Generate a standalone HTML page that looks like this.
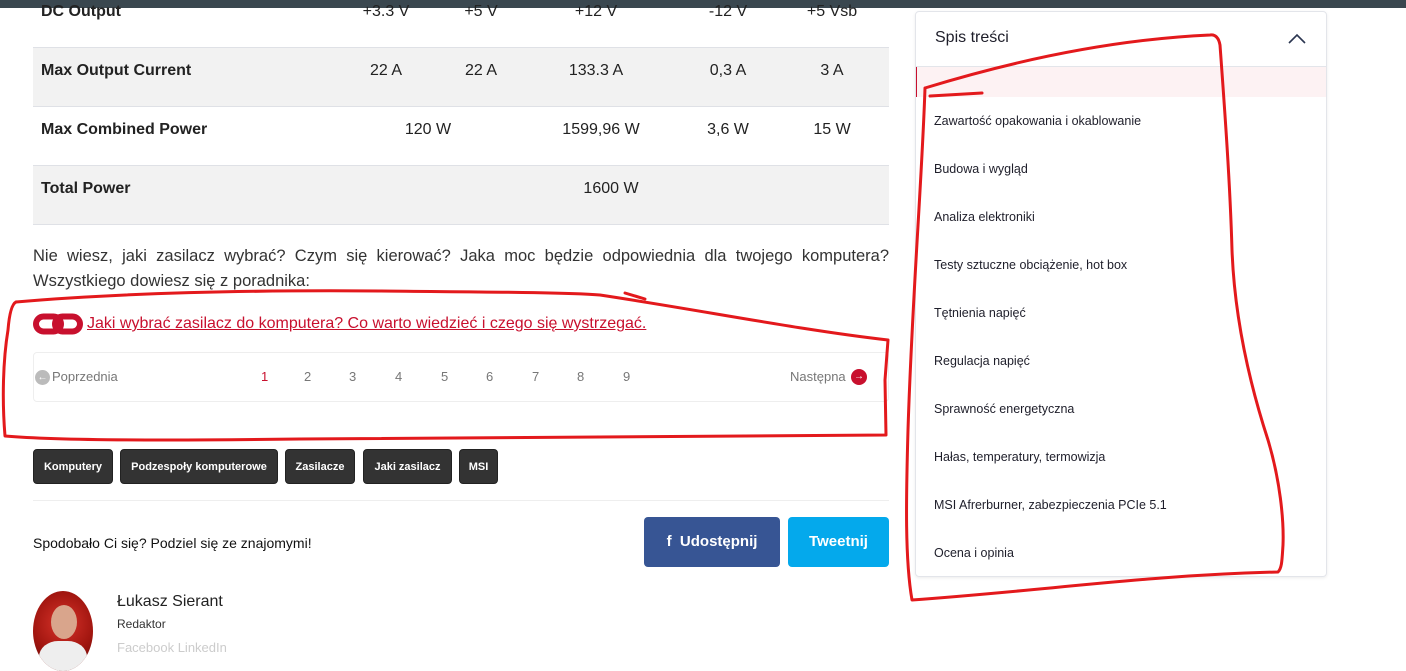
<!DOCTYPE html>
<html><head><meta charset="utf-8"><style>
*{margin:0;padding:0;box-sizing:border-box}
body{width:1406px;height:663px;overflow:hidden;background:#fff;font-family:"Liberation Sans",sans-serif;color:#222;position:relative}
.a{position:absolute;white-space:nowrap}
.row{position:absolute;left:33px;width:856px;height:59px;border-bottom:1px solid #dfe1e6}
.g{background:#f2f2f2}
.th{font-weight:bold;font-size:16px;left:41px}
.td{font-size:16px;transform:translateX(-50%)}
.tag{position:absolute;top:449px;height:35px;background:#333;color:#fff;font-size:11px;font-weight:bold;border-radius:4px;line-height:35px;text-align:center;border:1px solid #222}
.toc{font-size:12.5px;color:#1e1e2a;left:934px}
.pg{font-size:13px;color:#777;top:369px}
</style></head><body>
<div class="a" style="left:0;top:0;width:1406px;height:8px;background:#3a474f"></div>

<div class="row" style="top:-11px;height:59px;border-bottom:1px solid #dfe1e6"></div>
<div class="row g" style="top:48px"></div>
<div class="row" style="top:107px"></div>
<div class="row g" style="top:166px"></div>
<div class="a th" style="top:3px">DC Output</div>
<div class="a td" style="left:386px;top:3px">+3.3 V</div>
<div class="a td" style="left:481px;top:3px">+5 V</div>
<div class="a td" style="left:596px;top:3px">+12 V</div>
<div class="a td" style="left:728px;top:3px">-12 V</div>
<div class="a td" style="left:832px;top:3px">+5 Vsb</div>
<div class="a th" style="top:62px">Max Output Current</div>
<div class="a td" style="left:386px;top:62px">22 A</div>
<div class="a td" style="left:481px;top:62px">22 A</div>
<div class="a td" style="left:596px;top:62px">133.3 A</div>
<div class="a td" style="left:728px;top:62px">0,3 A</div>
<div class="a td" style="left:832px;top:62px">3 A</div>
<div class="a th" style="top:121px">Max Combined Power</div>
<div class="a td" style="left:428px;top:121px">120 W</div>
<div class="a td" style="left:601px;top:121px">1599,96 W</div>
<div class="a td" style="left:728px;top:121px">3,6 W</div>
<div class="a td" style="left:832px;top:121px">15 W</div>
<div class="a th" style="top:180px">Total Power</div>
<div class="a td" style="left:611px;top:180px">1600 W</div>

<div class="a" style="left:33px;top:244px;width:856px;font-size:16.5px;line-height:25px;color:#333;white-space:normal;text-align:justify;text-align-last:left">Nie wiesz, jaki zasilacz wybrać? Czym się kierować? Jaka moc będzie odpowiednia dla twojego komputera? Wszystkiego dowiesz się z poradnika:</div>
<svg class="a" style="left:33px;top:313px" width="50" height="22" viewBox="0 0 50 22"><rect x="3" y="3.5" width="25" height="15" rx="7.5" fill="none" stroke="#c8102e" stroke-width="6"/><rect x="22" y="3.5" width="25" height="15" rx="7.5" fill="none" stroke="#c8102e" stroke-width="6"/></svg>
<div class="a" style="left:87px;top:315px;font-size:16px;color:#c8102e;text-decoration:underline">Jaki wybrać zasilacz do komputera? Co warto wiedzieć i czego się wystrzegać.</div>

<div class="a" style="left:33px;top:352px;width:856px;height:50px;border:1px solid #eee;border-radius:4px"></div>
<div class="a" style="left:35px;top:370px;width:15px;height:15px;border-radius:50%;background:#bbb;color:#fff;font-size:10px;text-align:center;line-height:15px">&#8592;</div>
<div class="a pg" style="left:52px">Poprzednia</div>
<div class="a pg" style="left:261px;color:#c8102e">1</div>
<div class="a pg" style="left:304px">2</div>
<div class="a pg" style="left:349px">3</div>
<div class="a pg" style="left:395px">4</div>
<div class="a pg" style="left:441px">5</div>
<div class="a pg" style="left:486px">6</div>
<div class="a pg" style="left:532px">7</div>
<div class="a pg" style="left:577px">8</div>
<div class="a pg" style="left:623px">9</div>
<div class="a pg" style="left:790px">Następna</div>
<div class="a" style="left:851px;top:369px;width:16px;height:16px;border-radius:50%;background:#c8102e;color:#fff;font-size:10px;text-align:center;line-height:16px">&#8594;</div>

<div class="tag" style="left:33px;width:80px">Komputery</div>
<div class="tag" style="left:120px;width:158px">Podzespoły komputerowe</div>
<div class="tag" style="left:285px;width:70px">Zasilacze</div>
<div class="tag" style="left:363px;width:89px">Jaki zasilacz</div>
<div class="tag" style="left:459px;width:39px">MSI</div>
<div class="a" style="left:33px;top:500px;width:856px;height:1px;background:#eee"></div>

<div class="a" style="left:33px;top:535px;font-size:14px;color:#111">Spodobało Ci się? Podziel się ze znajomymi!</div>
<div class="a" style="left:644px;top:517px;width:136px;height:50px;background:#375594;border-radius:4px;color:#fff;font-weight:bold;font-size:15px;text-align:center;line-height:50px">f&nbsp; Udostępnij</div>
<div class="a" style="left:788px;top:517px;width:101px;height:50px;background:#04a9ec;border-radius:4px;color:#fff;font-weight:bold;font-size:15px;text-align:center;line-height:50px">Tweetnij</div>

<div class="a" style="left:33px;top:591px;width:60px;height:80px;border-radius:50%;overflow:hidden;background:radial-gradient(circle at 50% 40%,#d8332a 0,#a0150f 55%,#5a0806 100%)">
<div class="a" style="left:18px;top:14px;width:26px;height:34px;border-radius:50%;background:#d9a58c"></div>
<div class="a" style="left:6px;top:50px;width:48px;height:40px;border-radius:40% 40% 0 0;background:#eee"></div>
</div>
<div class="a" style="left:117px;top:593px;font-size:16px;color:#222">Łukasz Sierant</div>
<div class="a" style="left:117px;top:617px;font-size:12px;color:#333">Redaktor</div>
<div class="a" style="left:117px;top:640px;font-size:13px;color:#ccc">Facebook LinkedIn</div>

<div class="a" style="left:915px;top:11px;width:412px;height:566px;border:1px solid #e3e5ea;border-radius:4px;box-shadow:0 1px 3px rgba(0,0,0,.08)"></div>
<div class="a" style="left:935px;top:29px;font-size:16px;color:#1e1e2a">Spis treści</div>
<svg class="a" style="left:1287px;top:32px" width="20" height="12"><path d="M2 11 L10 3 L18 11" fill="none" stroke="#2a3550" stroke-width="1.6"/></svg>
<div class="a" style="left:916px;top:66px;width:410px;height:1px;background:#e3e5ea"></div>
<div class="a" style="left:916px;top:67px;width:410px;height:30px;background:#fdf2f3;border-left:1px solid #c8102e"></div>
<div class="a toc" style="top:114px">Zawartość opakowania i okablowanie</div>
<div class="a toc" style="top:162px">Budowa i wygląd</div>
<div class="a toc" style="top:210px">Analiza elektroniki</div>
<div class="a toc" style="top:258px">Testy sztuczne obciążenie, hot box</div>
<div class="a toc" style="top:306px">Tętnienia napięć</div>
<div class="a toc" style="top:354px">Regulacja napięć</div>
<div class="a toc" style="top:402px">Sprawność energetyczna</div>
<div class="a toc" style="top:450px">Hałas, temperatury, termowizja</div>
<div class="a toc" style="top:498px">MSI Afrerburner, zabezpieczenia PCIe 5.1</div>
<div class="a toc" style="top:546px">Ocena i opinia</div>

<svg class="a" style="left:0;top:0" width="1406" height="663"><g fill="none" stroke="#e3191c" stroke-width="3" stroke-linecap="round" stroke-linejoin="round">
<path d="M625 293 L645 299 M16 302 C120 293 250 290 380 291 C470 292 560 292 600 295 C700 310 800 330 888 340 L885 380 L886 435 C700 437 500 436 300 439 C150 441 50 440 5 436 C2 400 3 360 8 330 Q10 305 16 302"/>
<path d="M930 96 L982 93 M925 88 C1000 65 1100 40 1210 35 Q1218 34 1220 45 C1224 100 1230 180 1232 250 C1235 330 1255 400 1268 440 C1280 480 1284 520 1283 545 C1282 560 1282 568 1278 572 C1150 575 1050 590 912 600 C905 560 906 500 908 430 C912 300 922 180 925 88"/>
</g></svg>
</body></html>
